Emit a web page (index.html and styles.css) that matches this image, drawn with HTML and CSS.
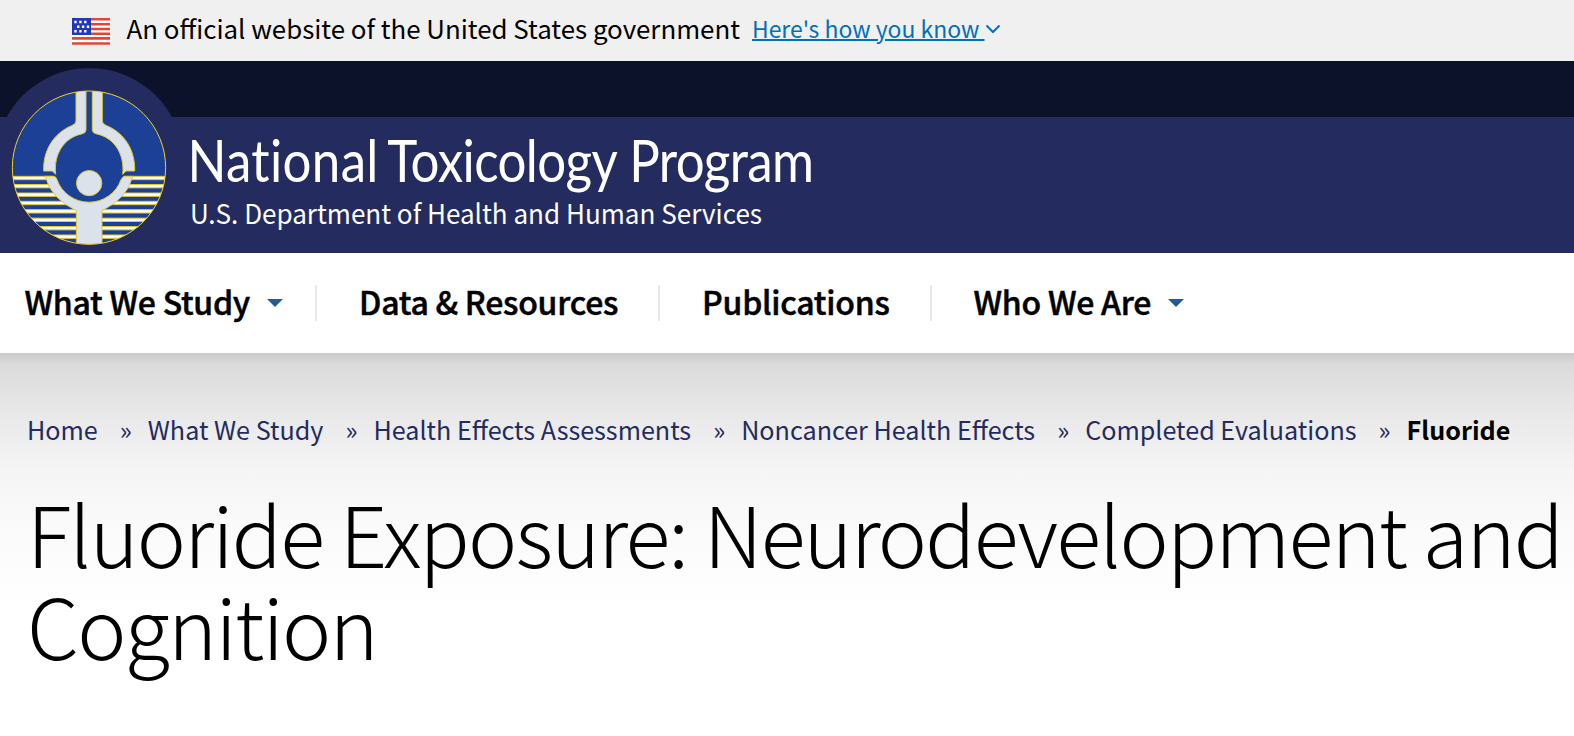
FILE: index.html
```html
<!DOCTYPE html>
<html lang="en">
<head>
    <meta charset="utf-8">
    <title>Fluoride Exposure: Neurodevelopment and Cognition</title>
    <link rel="stylesheet" href="styles.css">
</head>
<body>
    <div class="gov-banner">
        <svg class="flag" viewBox="0 0 38 27" width="38" height="27">
            <rect width="38" height="27" fill="#fff"/>
            <path d="M0 1.3H38M0 6.2H38M0 11H38M0 15.8H38M0 20.4H38M0 25.5H38" stroke="#e2462c" stroke-width="2.6"/>
            <rect width="19" height="17" fill="#2338b8"/>
            <path d="M2.300 4H16M5 8.700H18M2.300 13.300H16" stroke="#fff" stroke-width="2.4" stroke-dasharray="2.4 2.500"/>
        </svg>
        <span class="gov-text">An official website of the United States government</span>
        <a class="gov-link" href="#">Here's how you know </a>
        <svg class="chevron" viewBox="0 0 16 10" width="16" height="10"><path d="M1.500 1.500L8 8L14.500 1.500" fill="none" stroke="#0071bc" stroke-width="2"/></svg>
    </div>

    <header class="site-header">
        <svg class="brand" viewBox="0 61 900 192" width="900" height="192">
            <circle cx="89.3" cy="162.3" r="94.3" fill="#242b5e"/>
            <g transform="translate(0 60) scale(.33333)">
                <clipPath id="disc"><circle cx="267" cy="323" r="230"/></clipPath>
                <circle cx="267" cy="323" r="230" fill="#1c4096"/>
                <g clip-path="url(#disc)" stroke="#e3c92f" stroke-width="3">
                    <g fill="#fff">
                        <rect x="30" y="349" width="474" height="10"/>
                        <rect x="30" y="373.5" width="474" height="10"/>
                        <rect x="30" y="399" width="474" height="10"/>
                        <rect x="30" y="424" width="474" height="10"/>
                        <rect x="30" y="449" width="474" height="10"/>
                        <rect x="30" y="474.5" width="474" height="10"/>
                        <rect x="30" y="499.5" width="474" height="10"/>
                        <rect x="30" y="525" width="474" height="10"/>
                    </g>
                    <circle cx="267" cy="323" r="107" fill="#1c4096" stroke="none"/>
                    <path d="M137 352Q152 414 229 452V570H306V452Q382 414 397 352L402 349H374Q369 349 363 359A102 102 0 0 1 171 359Q168 349 160 349H132Z" fill="#dce2ec"/>
                    <path d="M228 80V183Q228 192 215 197C160 220 129 272 131 333H157L167 343C160 280 195 232 245 222Q258 219 258 210V80Z" fill="#dce2ec"/>
                    <path d="M307 80V183Q307 192 320 197C375 220 406 272 404 333H378L368 343C375 280 340 232 290 222Q277 219 277 210V80Z" fill="#dce2ec"/>
                    <circle cx="267.5" cy="369.5" r="38" fill="#dce2ec"/>
                </g>
                <circle cx="267" cy="323" r="230" fill="none" stroke="#f2d21f" stroke-width="3"/>
            </g>
            <g class="brand-name" transform="scale(.88 1)">
                <text x="213" y="182" textLength="217">National</text>
                <text x="440" y="182" textLength="262">Toxicology</text>
                <text x="715" y="182" textLength="210">Program</text>
            </g>
            <text class="brand-dept" x="190" y="224" textLength="572" lengthAdjust="spacingAndGlyphs">U.S. Department of Health and Human Services</text>
        </svg>
    </header>

    <nav class="main-nav">
        <a class="nav-item has-menu" href="#">What We Study<span class="caret"></span></a>
        <a class="nav-item" href="#">Data &amp; Resources</a>
        <a class="nav-item" href="#">Publications</a>
        <a class="nav-item has-menu" href="#">Who We Are<span class="caret"></span></a>
    </nav>

    <main class="content">
        <div class="breadcrumbs">
            <a href="#">Home</a>
            <a href="#">What We Study</a>
            <a href="#">Health Effects Assessments</a>
            <a href="#">Noncancer Health Effects</a>
            <a href="#">Completed Evaluations</a>
            <strong>Fluoride</strong>
        </div>
        <h1 class="page-title">Fluoride Exposure: Neurodevelopment and Cognition</h1>
    </main>
</body>
</html>
```
FILE: styles.css
```css
* {
    box-sizing: border-box;
}
body {
    margin: 0;
    height: 736px;
    overflow: hidden;
    background: #fff;
    color: #000;
    font-family: "Noto Sans CJK SC", "Noto Sans", sans-serif;
}
a {
    color: inherit;
    text-decoration: none;
}
.gov-banner {
    display: flex;
    align-items: flex-start;
    height: 61px;
    padding-left: 72px;
    background: #f0f0f0;
    white-space: pre;
}
.flag {
    margin-top: 18px;
}
.gov-text {
    margin-left: 16.5px;
    font-size: 25.87px;
    line-height: 55px;
}
.gov-link {
    margin-left: 12px;
    color: #0071bc;
    font-size: 22.95px;
    line-height: 56px;
    text-decoration: underline;
    text-decoration-thickness: 2px;
}
.chevron {
    margin-top: 24px;
}
.site-header {
    height: 192px;
    background: linear-gradient(#0d122b 56px, #242b5e 56px);
}
.brand {
    display: block;
}
.brand-name {
    fill: #fff;
    font-family: Lato, sans-serif;
    font-size: 58px;
    font-variant-ligatures: none;
}
.brand-dept {
    fill: #fff;
    font-size: 27px;
}
.main-nav {
    display: flex;
    align-items: center;
    height: 100px;
    padding: 0 0 0 24.5px;
    background: #fff;
}
.nav-item {
    display: flex;
    align-items: center;
    height: 36px;
    font-size: 32px;
    font-weight: 500;
    letter-spacing: -0.25px;
    line-height: 32px;
    white-space: nowrap;
    padding-bottom: 4px;
    -webkit-text-stroke: 0.5px #000;
}
.nav-item + .nav-item {
    margin-left: 40px;
    padding-left: 42px;
    border-left: 2px solid #e8e8e8;
}
.has-menu + .nav-item {
    margin-left: 32.5px;
}
.caret {
    margin: 4px 0 0 16.5px;
    border: 8px solid transparent;
    border-top-color: #205d95;
    border-bottom: 0;
}
.content {
    height: 383px;
    padding: 58px 0 0 27px;
    background: linear-gradient(#cacaca, #dbdbdb 12px, #dedede 24px, #e6e6e6 50px, #f5f5f5 118px, #fafafa 170px, #fff 260px);
}
.breadcrumbs {
    display: flex;
    height: 36px;
    color: #242b5e;
    font-size: 25.15px;
    line-height: 36px;
    white-space: nowrap;
}
.breadcrumbs > * + *::before {
    content: "»";
    margin: 0 16px 0 22px;
    font-weight: 400;
    color: #242b5e;
}
.breadcrumbs strong {
    color: #000;
}
.page-title {
    width: 1546px;
    margin: 39px 0 0;
    font-size: 83px;
    font-weight: 300;
    letter-spacing: -1.79px;
    line-height: 92px;
}
```
